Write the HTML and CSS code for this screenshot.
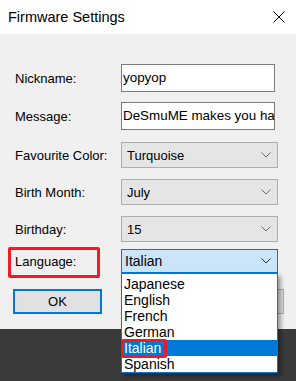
FILE: index.html
```html
<!DOCTYPE html>
<html>
<head>
<meta charset="utf-8">
<link rel="stylesheet" href="styles.css">
</head>
<body>
<div class="screen">
  <div class="titlebar">
    <span class="title">Firmware Settings</span>
    <svg class="close" width="12" height="12" viewBox="0 0 12 12"><path d="M0.5 0.5 L11.5 11.5 M11.5 0.5 L0.5 11.5" stroke="#000" stroke-width="1" fill="none"/></svg>
  </div>
  <div class="dialog">
    <div class="row row-nick">
      <div class="label">Nickname:</div>
      <div class="textbox">yopyop</div>
    </div>
    <div class="row row-msg">
      <div class="label">Message:</div>
      <div class="textbox">DeSmuME makes you happy!</div>
    </div>
    <div class="row row-fav">
      <div class="label">Favourite Color:</div>
      <div class="combo"><span>Turquoise</span><svg class="chev" width="10" height="6" viewBox="0 0 10 6"><path d="M0.5 0.5 L5 5 L9.5 0.5" stroke="#6d6d6d" fill="none"/></svg></div>
    </div>
    <div class="row row-month">
      <div class="label">Birth Month:</div>
      <div class="combo"><span>July</span><svg class="chev" width="10" height="6" viewBox="0 0 10 6"><path d="M0.5 0.5 L5 5 L9.5 0.5" stroke="#6d6d6d" fill="none"/></svg></div>
    </div>
    <div class="row row-day">
      <div class="label">Birthday:</div>
      <div class="combo"><span>15</span><svg class="chev" width="10" height="6" viewBox="0 0 10 6"><path d="M0.5 0.5 L5 5 L9.5 0.5" stroke="#6d6d6d" fill="none"/></svg></div>
    </div>
    <div class="row row-lang">
      <div class="label marked">Language:</div>
      <div class="combo open"><span>Italian</span><svg class="chev" width="10" height="6" viewBox="0 0 10 6"><path d="M0.5 0.5 L5 5 L9.5 0.5" stroke="#333" fill="none"/></svg>
        <ul class="dropdown">
          <li>Japanese</li>
          <li>English</li>
          <li>French</li>
          <li>German</li>
          <li class="selected">Italian</li>
          <li>Spanish</li>
        </ul>
      </div>
    </div>
    <div class="buttons">
      <div class="btn default">OK</div>
      <div class="btn">Cancel</div>
    </div>
  </div>
  <div class="desktop"></div>
</div>
</body>
</html>
```
FILE: styles.css
```css
html, body {
  margin: 0;
  padding: 0;
}
body {
  width: 296px;
  height: 381px;
  overflow: hidden;
  font-family: "Liberation Sans", Arial, sans-serif;
  background: #3a3a3a;
}
.screen {
  display: flex;
  flex-direction: column;
  height: 381px;
}
.titlebar {
  height: 34px;
  background: #ffffff;
  display: flex;
  align-items: center;
  justify-content: space-between;
  padding: 0 11px 0 8px;
  box-sizing: border-box;
}
.title {
  font-size: 14.5px;
  color: #000;
  margin-top: -1px;
}
.close {
  display: block;
}
.dialog {
  background: #f0f0f0;
  height: 295px;
  box-sizing: border-box;
  padding: 0 0 0 15px;
}
.row {
  display: flex;
  align-items: center;
}
.row-nick { margin-top: 30px; height: 28px; }
.row-msg { margin-top: 10px; height: 28px; }
.row-fav { margin-top: 12px; height: 26px; }
.row-month { margin-top: 11px; height: 26px; }
.row-day { margin-top: 11px; height: 26px; }
.row-lang { margin-top: 7px; height: 24px; }
.label {
  width: 106px;
  font-size: 13px;
  color: #000;
}
.textbox {
  width: 154px;
  height: 28px;
  box-sizing: border-box;
  border: 1px solid #7a7a7a;
  background: #fff;
  font-size: 13.4px;
  line-height: 26px;
  padding-left: 1px;
  white-space: nowrap;
  overflow: hidden;
}
.combo {
  position: relative;
  width: 157px;
  height: 26px;
  box-sizing: border-box;
  border: 1px solid #adadad;
  background: #e5e5e5;
  font-size: 13px;
  display: flex;
  align-items: center;
  justify-content: space-between;
  padding: 0 6px 0 5px;
}
.combo.open {
  height: 24px;
  background: #cce4f7;
  border-color: #0078d7;
  font-size: 14px;
  padding-left: 3px;
}
.chev { display: block; }
.marked {
  position: relative;
}
.marked::before {
  content: "";
  position: absolute;
  left: -7px;
  top: -7px;
  width: 92px;
  height: 31px;
  box-sizing: border-box;
  border: 3px solid #ed1c24;
  border-radius: 2px;
}
.dropdown {
  position: absolute;
  left: -1px;
  top: 23px;
  width: 157px;
  box-sizing: border-box;
  margin: 0;
  padding: 2px 0 0;
  list-style: none;
  background: #fff;
  border: 1px solid #0078d7;
  box-shadow: 3px 3px 4px rgba(0,0,0,0.35);
  z-index: 5;
  font-size: 14px;
}
.dropdown li {
  height: 16px;
  line-height: 16px;
  padding-left: 2px;
  color: #000;
}
.dropdown li.selected {
  position: relative;
  background: #0078d7;
  color: #fff;
}
.dropdown li.selected::before {
  content: "";
  position: absolute;
  left: -1px;
  top: -1px;
  width: 46px;
  height: 19px;
  box-sizing: border-box;
  border: 3px solid #ed1c24;
  border-radius: 2px;
}
.buttons {
  display: flex;
  justify-content: space-between;
  margin-top: 16px;
  margin-left: -2px;
  width: 271px;
}
.btn {
  width: 89px;
  height: 25px;
  box-sizing: border-box;
  border: 1px solid #adadad;
  background: #e1e1e1;
  font-size: 13px;
  display: flex;
  align-items: center;
  justify-content: center;
}
.btn.default {
  border: 2px solid #0078d7;
}
.desktop {
  flex: 1;
  background: #3a3a3a;
}
```
